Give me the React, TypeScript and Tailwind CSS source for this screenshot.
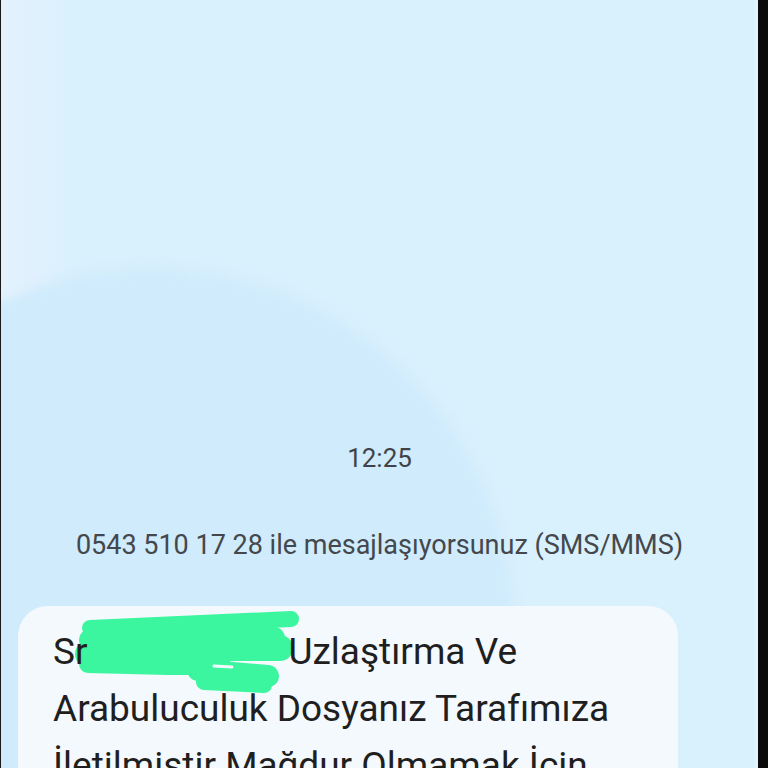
import React from 'react';

const Scribble = () => (
  <svg className="absolute left-0 top-0 pointer-events-none" width="660" height="120" viewBox="0 0 660 120">
    <g stroke="#3cf59f" strokeLinecap="round" strokeLinejoin="round" fill="none">
      <path d="M72 22 L273 13" strokeWidth="16" />
      <path d="M72 34 L200 28 L256 32" strokeWidth="22" />
      <path d="M70 48 L180 42 L262 42" strokeWidth="26" />
      <path d="M70 58 L150 60 L205 60" strokeWidth="18" />
      <path d="M180 64 L250 70" strokeWidth="22" />
      <path d="M186 76 L246 79" strokeWidth="16" />
    </g>
    <path d="M196 60 L214 61" stroke="#f4f9fd" strokeWidth="3" strokeLinecap="round" />
  </svg>
);

export default function App() {
  return (
    <div className="flex h-[768px] w-[768px] overflow-hidden bg-[#0a0a0a]" style={{ fontFamily: 'Roboto, "Noto Sans", sans-serif' }}>
      <div className="w-px bg-[#1a1a1a]" />
      <div className="relative w-[757px] overflow-hidden bg-[#d9f0fd]">
        {/* soft background shapes */}
        <div className="absolute left-0 top-0 h-[300px] w-[70px] bg-gradient-to-r from-[#e3f2fd] via-[#e0f1fd] to-[#d9f0fd]" />
        <div className="absolute left-[-212px] top-[270px] h-[724px] w-[724px] rounded-full bg-[#cfebfc] blur-[6px]" />
        <div className="absolute right-0 top-0 h-full w-[4px] bg-[#e0f2fd]" />

        <div className="relative flex flex-col items-center pt-[442px]">
          <div className="text-[26px] leading-[32px] text-[#3f4347]">12:25</div>
          <div className="mt-[55px] text-[27px] leading-[32px] text-[#44484c]">
            0543 510 17 28 ile mesajlaşıyorsunuz (SMS/MMS)
          </div>
        </div>

        <div className="relative ml-[17px] mt-[45px] w-[660px] rounded-[30px] bg-[#f4f9fd] px-[35px] pb-[30px] pt-[17px]">
          <Scribble />
          <p className="relative text-[37px] leading-[57px] text-[#1f1f1f]">
            Sr<span className="inline-block w-[201px]" />Uzlaştırma Ve Arabuluculuk Dosyanız Tarafımıza İletilmiştir Mağdur Olmamak İçin
          </p>
        </div>
      </div>
    </div>
  );
}
